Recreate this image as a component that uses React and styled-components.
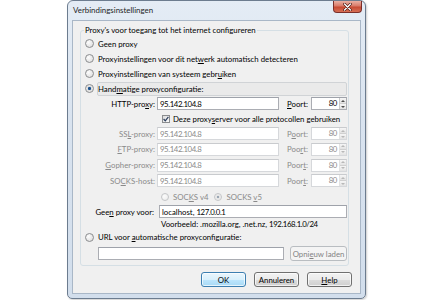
import React from "react";
import styled, { createGlobalStyle } from "styled-components";

const GlobalStyle = createGlobalStyle`
  html, body {
    margin: 0;
    padding: 0;
    background: #fff;
  }
  body {
    font-family: Lato, "Open Sans", sans-serif;
    font-size: 7.8px;
    color: #000;
  }
`;

const Desktop = styled.div`
  width: 435px;
  height: 300px;
  overflow: hidden;
  background: #fff;
`;

const Window = styled.div`
  margin-left: 67px;
  width: 299px;
  height: 299px;
  box-sizing: border-box;
  border: 1px solid #6c7c8f;
  border-radius: 6px 6px 5px 5px;
  background: linear-gradient(#e4ecf5, #d9e3ef 40%, #d2deec);
  padding: 0 4px 4px 4px;
  display: flex;
  flex-direction: column;
  box-shadow: 1px 1px 2px rgba(0, 0, 0, 0.2);
`;

const TitleBar = styled.div`
  height: 19px;
  display: flex;
  align-items: flex-start;
  justify-content: space-between;
`;

const Title = styled.span`
  padding: 4px 0 0 1px;
  font-size: 7.9px;
  color: #1e1e1e;
`;

const CloseButton = styled.div`
  width: 29px;
  height: 12px;
  margin-right: -1px;
  box-sizing: border-box;
  border: 1px solid #7a2f2a;
  border-top: none;
  border-radius: 0 0 4px 4px;
  background: linear-gradient(#eab0a3, #d97a68 45%, #c74a33 55%, #d66f55);
  display: flex;
  align-items: center;
  justify-content: center;
`;

const Client = styled.div`
  flex: 1;
  background: #f0f0f0;
  border: 1px solid #a9b7c7;
  padding: 4px 8px 0 7px;
  display: flex;
  flex-direction: column;
`;

const Group = styled.fieldset`
  margin: 0 3px 0 0;
  padding: 1px 1px 3px 3px;
  border: 1px solid #d5dfe5;
  border-radius: 3px;
  min-width: 0;
`;

const Legend = styled.legend`
  padding: 0 1px;
  line-height: 10px;
`;

const Row = styled.div`
  height: ${(p) => p.$h || 15}px;
  display: flex;
  align-items: center;
  gap: ${(p) => (p.$gap === undefined ? 4 : p.$gap)}px;
  padding-left: ${(p) => p.$indent || 0}px;
  white-space: nowrap;
  color: ${(p) => (p.$disabled ? "#8a8a8a" : "inherit")};
`;

const ProxyRow = styled.div`
  height: ${(p) => p.$h || 15}px;
  display: grid;
  grid-template-columns: 73px 122px 32px 1fr;
  align-items: center;
  white-space: nowrap;
  color: ${(p) => (p.$disabled ? "#8a8a8a" : "inherit")};
`;

const ExceptRow = styled.div`
  height: ${(p) => p.$h || 15}px;
  display: grid;
  grid-template-columns: 75px 1fr;
  align-items: center;
  white-space: nowrap;
`;

const FieldLabel = styled.span`
  text-align: right;
  padding-right: ${(p) => p.$pr || 2}px;
`;

const PortLabel = styled.span`
  padding-left: 8px;
`;

const Num = styled.span`
  letter-spacing: -0.4px;
`;

const Radio = styled.span`
  flex: none;
  width: ${(p) => p.$size || 9}px;
  height: ${(p) => p.$size || 9}px;
  margin-left: ${(p) => p.$ml || 1}px;
  box-sizing: border-box;
  border-radius: 50%;
  border: 1px solid ${(p) => (p.$disabled ? "#c4c6c8" : "#8b8d8f")};
  background: ${(p) =>
    p.$checked
      ? p.$disabled
        ? "radial-gradient(circle, #9aa6b3 0 28%, #e4e4e4 34%, #f8f8f8 100%)"
        : "radial-gradient(circle, #1d4f86 0 20%, #4f86c0 32%, #dcdcdc 40%, #fafafa 100%)"
      : p.$disabled
      ? "radial-gradient(circle at 35% 35%, #fbfbfb, #ebebeb)"
      : "radial-gradient(circle at 35% 35%, #fdfdfd, #d8d8d8)"};
`;

const Check = styled.span`
  flex: none;
  width: 8px;
  height: 8px;
  box-sizing: border-box;
  border: 1px solid #8b8d8f;
  background: linear-gradient(135deg, #dcdcdc, #fbfbfb);
  display: flex;
  align-items: center;
  justify-content: center;
`;

const ManualBox = styled.div`
  flex: 1;
  height: 14px;
  box-sizing: border-box;
  border: 1px solid #d0d3d6;
  border-radius: 2px;
  background: #eaeaea;
  display: flex;
  align-items: center;
`;

const Input = styled.div`
  height: 13px;
  box-sizing: border-box;
  border: 1px solid ${(p) => (p.$disabled ? "#d6d8db" : "#abadb3")};
  border-top-color: ${(p) => (p.$disabled ? "#c9cbce" : "#9ea2aa")};
  background: #fff;
  display: flex;
  align-items: center;
  padding: 0 2px;
  overflow: hidden;
  white-space: pre;
  color: ${(p) => (p.$disabled ? "#8a8a8a" : "#000")};
  flex: ${(p) => (p.$grow ? 1 : "none")};
`;

const PortBox = styled.div`
  height: 13px;
  box-sizing: border-box;
  border: 1px solid ${(p) => (p.$disabled ? "#d6d8db" : "#abadb3")};
  border-top-color: ${(p) => (p.$disabled ? "#c9cbce" : "#9ea2aa")};
  background: #fff;
  display: flex;
  color: ${(p) => (p.$disabled ? "#8a8a8a" : "#000")};
`;

const PortValue = styled.span`
  flex: 1;
  text-align: right;
  padding-right: 2px;
  line-height: 11px;
`;

const Spinner = styled.div`
  width: 6px;
  display: flex;
  flex-direction: column;
  border-left: 1px solid ${(p) => (p.$disabled ? "#e2e2e2" : "#c9c9c9")};
`;

const SpinHalf = styled.div`
  flex: 1;
  display: flex;
  align-items: center;
  justify-content: center;
  background: linear-gradient(#f6f6f6, #e3e3e3);
  & + & {
    border-top: 1px solid #d0d0d0;
  }
`;

const Note = styled.div`
  height: ${(p) => p.$h}px;
  display: flex;
  align-items: center;
  padding-left: 77px;
  white-space: pre;
`;

const SocksGroup = styled.span`
  display: flex;
  align-items: center;
  gap: 4px;
`;

const ButtonBar = styled.div`
  margin-top: 6px;
  display: flex;
  justify-content: flex-end;
  gap: 8px;
`;

const Button = styled.div`
  width: ${(p) => p.$w || 45}px;
  height: 15px;
  box-sizing: border-box;
  border: 1px solid ${(p) => (p.$default ? "#3c7fb1" : p.$disabled ? "#b9bdc1" : "#707070")};
  border-radius: 3px;
  background: ${(p) =>
    p.$disabled
      ? "#f4f4f4"
      : p.$default
      ? "linear-gradient(#eaf6fd, #d9f0fc 50%, #bee6fd 51%, #a7d9f5)"
      : "linear-gradient(#f2f2f2, #ebebeb 50%, #dddddd 51%, #cfcfcf)"};
  box-shadow: inset 0 0 0 1px ${(p) => (p.$disabled ? "transparent" : "rgba(255,255,255,0.7)")};
  display: flex;
  align-items: center;
  justify-content: center;
  color: ${(p) => (p.$disabled ? "#838383" : "#000")};
  white-space: nowrap;
`;

const U = styled.span`
  text-decoration: underline;
  text-underline-offset: 1px;
`;

const Port = ({ disabled }) => (
  <PortBox $disabled={disabled}>
    <PortValue>
      <Num>80</Num>
    </PortValue>
    <Spinner $disabled={disabled}>
      <SpinHalf>
        <svg width="4" height="2" viewBox="0 0 4 2">
          <path d="M0 2 L2 0 L4 2 Z" fill={disabled ? "#b8b8b8" : "#4d4d4d"} />
        </svg>
      </SpinHalf>
      <SpinHalf>
        <svg width="4" height="2" viewBox="0 0 4 2">
          <path d="M0 0 L2 2 L4 0 Z" fill={disabled ? "#b8b8b8" : "#4d4d4d"} />
        </svg>
      </SpinHalf>
    </Spinner>
  </PortBox>
);

const proxies = [
  { label: <>SS<U>L</U>-proxy:</>, port: <>P<U>o</U>ort:</>, h: 15 },
  { label: <><U>F</U>TP-proxy:</>, port: <>Poo<U>r</U>t:</>, h: 16 },
  { label: <><U>G</U>opher-proxy:</>, port: <>Poor<U>t</U>:</>, h: 16 },
  { label: <>SO<U>C</U>KS-host:</>, port: <>Poor<U>t</U>:</>, h: 15 },
];

export default function App() {
  return (
    <Desktop>
      <GlobalStyle />
      <Window>
        <TitleBar>
          <Title>Verbindingsinstellingen</Title>
          <CloseButton>
            <svg width="9" height="8" viewBox="0 0 9 8">
              <path d="M1.5 1 L7.5 7 M7.5 1 L1.5 7" stroke="#4a1a14" strokeWidth="2.6" strokeLinecap="round" />
              <path d="M1.5 1 L7.5 7 M7.5 1 L1.5 7" stroke="#fff" strokeWidth="1.4" strokeLinecap="round" />
            </svg>
          </CloseButton>
        </TitleBar>
        <Client>
          <Group>
            <Legend>Proxy's voor toegang tot het internet configureren</Legend>
            <Row>
              <Radio />
              <span>Geen proxy</span>
            </Row>
            <Row>
              <Radio />
              <span>
                Proxyinstellingen voor dit net<U>w</U>erk automatisch detecteren
              </span>
            </Row>
            <Row>
              <Radio />
              <span>
                Proxyinstellingen van systeem gebr<U>u</U>iken
              </span>
            </Row>
            <Row $gap={3}>
              <Radio $checked />
              <ManualBox>
                Hand<U>m</U>atige proxyconfiguratie:
              </ManualBox>
            </Row>
            <ProxyRow>
              <FieldLabel>
                HTTP-pro<U>x</U>y:
              </FieldLabel>
              <Input>
                <Num>95.142.104.8</Num>
              </Input>
              <PortLabel>
                <U>P</U>oort:
              </PortLabel>
              <Port />
            </ProxyRow>
            <Row $indent={78} $gap={3}>
              <Check>
                <svg width="6" height="6" viewBox="0 0 6 6">
                  <path d="M0.6 3 L2.3 4.9 L5.4 0.8" stroke="#2b3d5c" strokeWidth="1.2" fill="none" />
                </svg>
              </Check>
              <span>
                Deze proxy<U>s</U>erver voor alle protocollen gebruiken
              </span>
            </Row>
            {proxies.map((p, i) => (
              <ProxyRow key={i} $h={p.h} $disabled>
                <FieldLabel>{p.label}</FieldLabel>
                <Input $disabled>
                  <Num>95.142.104.8</Num>
                </Input>
                <PortLabel>{p.port}</PortLabel>
                <Port disabled />
              </ProxyRow>
            ))}
            <Row $h={17} $indent={76} $gap={5} $disabled>
              <SocksGroup>
                <Radio $size={8} $ml={0} $disabled />
                <span>
                  SOC<U>K</U>S v4
                </span>
              </SocksGroup>
              <SocksGroup>
                <Radio $size={8} $ml={0} $disabled $checked />
                <span>
                  SOCKS <U>v</U>5
                </span>
              </SocksGroup>
            </Row>
            <ExceptRow $h={13}>
              <FieldLabel $pr={5}>
                Gee<U>n</U> proxy voor:
              </FieldLabel>
              <Input>
                {"localhost, "}
                <Num>127.0.0.1</Num>
              </Input>
            </ExceptRow>
            <Note $h={11}>
              {"Voorbeeld: .mozilla.org, .net.nz, "}
              <Num>192.168.1.0/24</Num>
            </Note>
            <Row $h={16}>
              <Radio />
              <span>
                URL voor <U>a</U>utomatische proxyconfiguratie:
              </span>
            </Row>
            <Row $h={17} $indent={14} $gap={6}>
              <Input $grow />
              <Button $w={57} $disabled>
                Opni<U>e</U>uw laden
              </Button>
            </Row>
          </Group>
          <ButtonBar>
            <Button $default>OK</Button>
            <Button>Annuleren</Button>
            <Button>
              <U>H</U>elp
            </Button>
          </ButtonBar>
        </Client>
      </Window>
    </Desktop>
  );
}
